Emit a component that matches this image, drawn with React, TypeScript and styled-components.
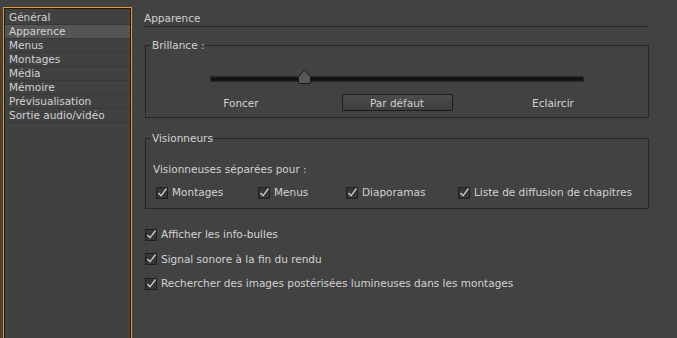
import { createGlobalStyle } from "styled-components";
import styled from "styled-components";

const GlobalStyle = createGlobalStyle`
  html, body {
    margin: 0;
    padding: 0;
    background: #424242;
    overflow: hidden;
  }
  body {
    font-family: "DejaVu Sans", "Liberation Sans", sans-serif;
    font-size: 10.5px;
    color: #d2d2d2;
  }
`;

const Page = styled.div`
  display: flex;
  width: 677px;
  height: 338px;
  overflow: hidden;
`;

const Sidebar = styled.div`
  width: 129px;
  height: 340px;
  margin: 7px 0 0 3px;
  box-sizing: border-box;
  border: 1px solid rgb(240, 150, 20);
  flex-shrink: 0;
`;

const SidebarInner = styled.ul`
  list-style: none;
  margin: 0;
  padding: 2px 0 0 0;
  height: 100%;
  box-sizing: border-box;
  border: 1px solid #1c1c1c;
  background: #414141;
`;

const NavItem = styled.li<{ selected?: boolean }>`
  height: 13px;
  line-height: 13px;
  padding-left: 4px;
  border-bottom: 1px solid #383838;
  background: ${({ selected }) => (selected ? "#555555" : "transparent")};
  white-space: nowrap;
`;

const Main = styled.div`
  flex: 1;
  padding: 12px 29px 0 12px;
`;

const Title = styled.div`
  line-height: 13px;
  padding-bottom: 1px;
  border-bottom: 1px solid #262626;
`;

const Group = styled.fieldset<{ top: number; height: number }>`
  margin: ${({ top }) => top}px 0 0 1px;
  padding: 0;
  height: ${({ height }) => height}px;
  box-sizing: border-box;
  min-width: 0;
  border: 1px solid #262626;
`;

const Legend = styled.legend`
  margin-left: 5px;
  padding: 0 1px;
  line-height: 13px;
`;

const SliderArea = styled.div`
  width: 372px;
  margin: 25px auto 0;
`;

const Track = styled.div`
  position: relative;
  height: 4px;
  box-sizing: border-box;
  background: #111;
  border-top: 1px solid #1a1a1a;
  border-bottom: 1px solid #1a1a1a;
  box-shadow: 0 0 0 1px #2a2a2a;
`;

const Thumb = styled.svg`
  position: absolute;
  top: -8px;
  margin-left: -6px;
`;

const LabelRow = styled.div`
  display: grid;
  grid-template-columns: 60px 1fr 60px;
  align-items: center;
  margin-top: 13px;
`;

const SideLabel = styled.div`
  text-align: center;
`;

const DefaultButton = styled.button`
  justify-self: center;
  width: 111px;
  height: 17px;
  padding: 0;
  font: inherit;
  color: #cfcfcf;
  background: linear-gradient(#4c4c4c, #3e3e3e);
  border: 1px solid #1c1c1c;
  border-radius: 1px;
`;

const Caption = styled.div`
  margin: 18px 0 0 7px;
  line-height: 13px;
`;

const CheckRow = styled.div`
  display: flex;
  margin: 10px 0 0 10px;
`;

const CheckCell = styled.div<{ width: number }>`
  width: ${({ width }) => width}px;
`;

const OptionList = styled.div`
  display: flex;
  flex-direction: column;
  gap: 11.5px;
  margin: 19px 0 0 1px;
`;

const CheckLabel = styled.label`
  display: flex;
  align-items: center;
  gap: 4px;
  line-height: 13px;
  white-space: nowrap;
`;

const Box = styled.svg`
  flex-shrink: 0;
`;

const NAV = [
  "Général",
  "Apparence",
  "Menus",
  "Montages",
  "Média",
  "Mémoire",
  "Prévisualisation",
  "Sortie audio/vidéo",
];

const Check = ({ label }: { label: string }) => (
  <CheckLabel>
    <Box width="12" height="12" viewBox="0 0 12 12">
      <rect x="0.5" y="0.5" width="11" height="11" fill="#363636" stroke="#1e1e1e" />
      <polyline
        points="2.5,6 5,8.8 10.5,1.5"
        fill="none"
        stroke="#d0d0d0"
        strokeWidth="1.3"
      />
    </Box>
    {label}
  </CheckLabel>
);

export default function App() {
  const brightness = 0.25;

  return (
    <>
      <GlobalStyle />
      <Page>
        <Sidebar>
          <SidebarInner>
            {NAV.map((item) => (
              <NavItem key={item} selected={item === "Apparence"}>
                {item}
              </NavItem>
            ))}
          </SidebarInner>
        </Sidebar>
        <Main>
          <Title>Apparence</Title>
          <Group top={12} height={79}>
            <Legend>Brillance :</Legend>
            <SliderArea>
              <Track>
                <Thumb
                  width="13"
                  height="14"
                  viewBox="0 0 13 14"
                  style={{ left: `${brightness * 100}%` }}
                >
                  <path
                    d="M0.5 6.5 L6.5 0.5 L12.5 6.5 L12.5 13.5 L0.5 13.5 Z"
                    fill="#575757"
                    stroke="#1a1a1a"
                  />
                </Thumb>
              </Track>
              <LabelRow>
                <SideLabel>Foncer</SideLabel>
                <DefaultButton>Par défaut</DefaultButton>
                <SideLabel>Eclaircir</SideLabel>
              </LabelRow>
            </SliderArea>
          </Group>
          <Group top={14} height={77}>
            <Legend>Visionneurs</Legend>
            <Caption>Visionneuses séparées pour :</Caption>
            <CheckRow>
              <CheckCell width={102}>
                <Check label="Montages" />
              </CheckCell>
              <CheckCell width={88}>
                <Check label="Menus" />
              </CheckCell>
              <CheckCell width={112}>
                <Check label="Diaporamas" />
              </CheckCell>
              <CheckCell width={190}>
                <Check label="Liste de diffusion de chapitres" />
              </CheckCell>
            </CheckRow>
          </Group>
          <OptionList>
            <Check label="Afficher les info-bulles" />
            <Check label="Signal sonore à la fin du rendu" />
            <Check label="Rechercher des images postérisées lumineuses dans les montages" />
          </OptionList>
        </Main>
      </Page>
    </>
  );
}
